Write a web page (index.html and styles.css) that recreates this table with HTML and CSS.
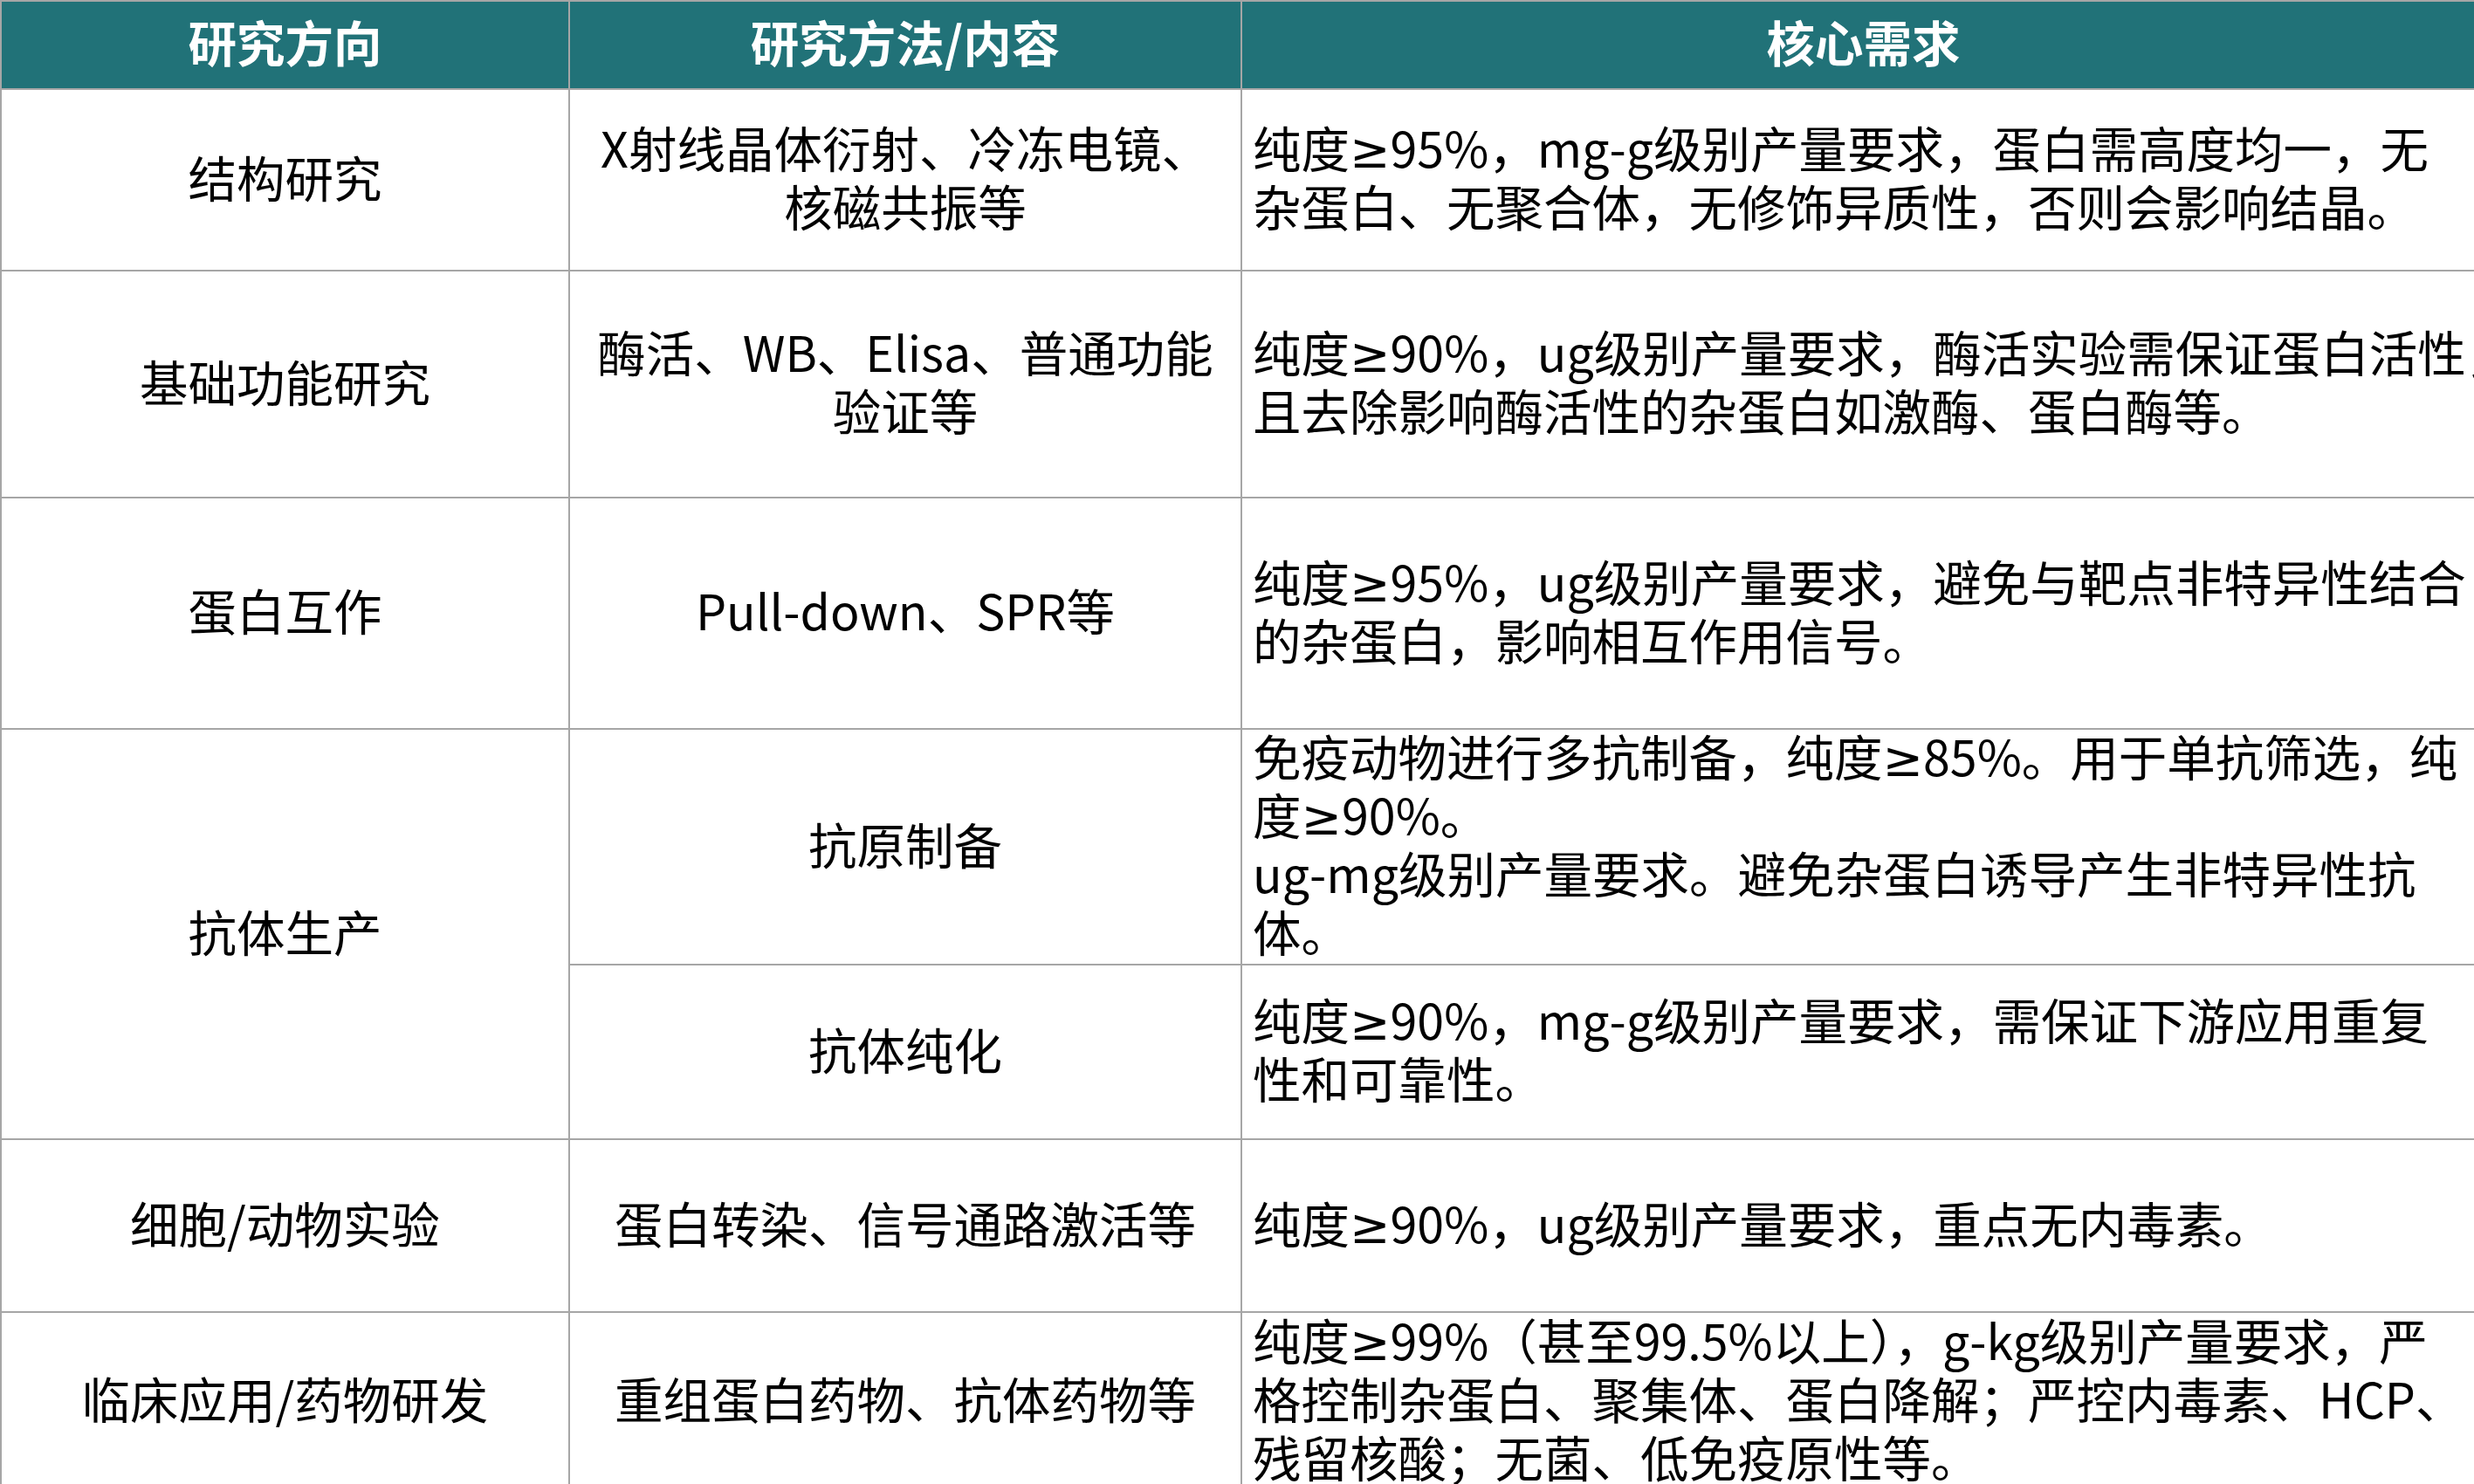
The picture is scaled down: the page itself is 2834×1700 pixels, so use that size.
FILE: index.html
```html
<!DOCTYPE html>
<html lang="zh-CN">
<head>
<meta charset="utf-8">
<title>蛋白研究需求</title>
<link rel="stylesheet" href="styles.css">
</head>
<body>
<table class="req-table">
  <colgroup>
    <col class="col-dir">
    <col class="col-method">
    <col class="col-need">
  </colgroup>
  <thead>
    <tr class="row-head">
      <th><div class="txt">研究方向</div></th>
      <th><div class="txt">研究方法/内容</div></th>
      <th><div class="txt">核心需求</div></th>
    </tr>
  </thead>
  <tbody>
    <tr class="row-1">
      <td class="c"><div class="txt">结构研究</div></td>
      <td class="c"><div class="txt">X射线晶体衍射、冷冻电镜、核磁共振等</div></td>
      <td class="l"><div class="txt">纯度<span class="ge">≥</span>95%，mg-g级别产量要求，蛋白需高度均一，无<br>杂蛋白、无聚合体，无修饰异质性，否则会影响结晶。</div></td>
    </tr>
    <tr class="row-2">
      <td class="c"><div class="txt">基础功能研究</div></td>
      <td class="c"><div class="txt">酶活、WB、Elisa、普通功能验证等</div></td>
      <td class="l"><div class="txt">纯度<span class="ge">≥</span>90%，ug级别产量要求，酶活实验需保证蛋白活性，<br>且去除影响酶活性的杂蛋白如激酶、蛋白酶等。</div></td>
    </tr>
    <tr class="row-3">
      <td class="c"><div class="txt">蛋白互作</div></td>
      <td class="c"><div class="txt">Pull-down、SPR等</div></td>
      <td class="l"><div class="txt">纯度<span class="ge">≥</span>95%，ug级别产量要求，避免与靶点非特异性结合<br>的杂蛋白，影响相互作用信号。</div></td>
    </tr>
    <tr class="row-4a">
      <td class="c" rowspan="2"><div class="txt">抗体生产</div></td>
      <td class="c"><div class="txt">抗原制备</div></td>
      <td class="l"><div class="txt">免疫动物进行多抗制备，纯度<span class="ge">≥</span>85%。用于单抗筛选，纯<br>度<span class="ge">≥</span>90%。<br>ug-mg级别产量要求。避免杂蛋白诱导产生非特异性抗<br>体。</div></td>
    </tr>
    <tr class="row-4b">
      <td class="c"><div class="txt">抗体纯化</div></td>
      <td class="l"><div class="txt">纯度<span class="ge">≥</span>90%，mg-g级别产量要求，需保证下游应用重复<br>性和可靠性。</div></td>
    </tr>
    <tr class="row-5">
      <td class="c"><div class="txt">细胞/动物实验</div></td>
      <td class="c"><div class="txt">蛋白转染、信号通路激活等</div></td>
      <td class="l"><div class="txt">纯度<span class="ge">≥</span>90%，ug级别产量要求，重点无内毒素。</div></td>
    </tr>
    <tr class="row-6">
      <td class="c"><div class="txt">临床应用/药物研发</div></td>
      <td class="c"><div class="txt">重组蛋白药物、抗体药物等</div></td>
      <td class="l"><div class="txt">纯度<span class="ge">≥</span>99%（甚至99.5%以上），g-kg级别产量要求，严<br>格控制杂蛋白、聚集体、蛋白降解；严控内毒素、HCP、<br>残留核酸；无菌、低免疫原性等。</div></td>
    </tr>
  </tbody>
</table>
</body>
</html>
```

FILE: styles.css
```css
html, body {
  margin: 0;
  padding: 0;
  background: #ffffff;
  overflow: hidden;
}

body {
  width: 2834px;
  height: 1700px;
  font-family: "Noto Sans CJK SC", "Noto Sans", sans-serif;
}

.req-table {
  border-collapse: collapse;
  table-layout: fixed;
  width: 2846px;
  font-size: 55.5px;
  line-height: 67px;
  color: #000000;
}

.col-dir { width: 651px; }
.col-method { width: 770px; }
.col-need { width: 1425px; }

.req-table th,
.req-table td {
  border: 2px solid #a6a6a6;
  padding: 0 12px;
  vertical-align: middle;
}

.req-table th {
  background: #217278;
  color: #ffffff;
  font-weight: 700;
  text-align: center;
}

.req-table td.c { text-align: center; }
.req-table td.l {
  text-align: left;
  white-space: nowrap;
}

/* the CJK glyphs sit a little high in their line boxes in the reference */
.txt {
  transform: translateY(-4px);
}

.ge {
  font-family: "Noto Sans", "DejaVu Sans", sans-serif;
  line-height: 1;
}

.row-head { height: 101px; }
.row-1 { height: 208px; }
.row-2 { height: 260px; }
.row-3 { height: 265px; }
.row-4a { height: 269px; }
.row-4b { height: 200px; }
.row-5 { height: 198px; }
.row-6 { height: 204px; }
```
